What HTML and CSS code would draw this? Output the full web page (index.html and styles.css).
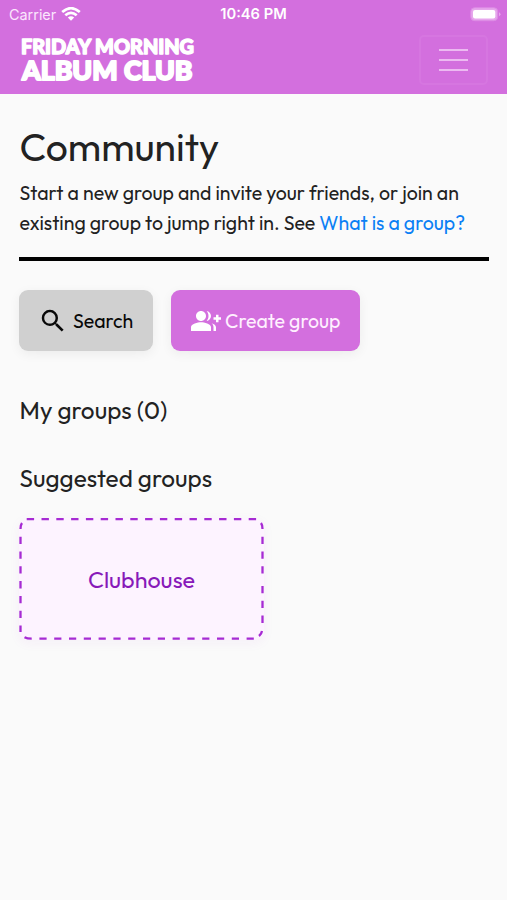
FILE: index.html
```html
<!DOCTYPE html>
<html lang="en">
<head>
<meta charset="utf-8">
<meta name="viewport" content="width=device-width, initial-scale=1">
<title>Community – Friday Morning Album Club</title>
<link rel="stylesheet" href="styles.css">
</head>
<body>
<header class="header">
  <div class="status">
    <div class="carrier"><span>Carrier</span>
      <svg width="20" height="14" viewBox="0 0 20 14" fill="none" stroke="#fff" stroke-width="2.7"><path d="M1.2 5.1Q10-2.7 18.8 5.1M4.3 8.3Q10 3.4 15.7 8.3"/><path d="M6.8 10.4Q10 7.9 13.2 10.4L10 13.8Z" fill="#fff" stroke="none"/></svg>
    </div>
    <div class="time">10:46 PM</div>
    <svg class="battery" width="31" height="15" viewBox="0 0 31 15"><rect x=".7" y=".7" width="27" height="13" rx="4" fill="#e6a6ec" stroke="#dc8be4"/><rect x="3" y="3" width="22.3" height="8.6" rx="2" fill="#fff"/><path d="M29 5.2Q32 7.2 29 9.2Z" fill="#e6a6ec"/></svg>
  </div>
  <div class="navbar">
    <svg class="logo" width="180" height="54" viewBox="0 0 180 54" role="img" aria-label="Friday Morning Album Club"><text class="logo-top" x="1" y="22" textLength="173" lengthAdjust="spacingAndGlyphs">FRIDAY MORNING</text><text class="logo-bottom" x="2" y="47.800" textLength="170.500" lengthAdjust="spacingAndGlyphs">ALBUM CLUB</text></svg>
    <button class="toggle" aria-label="Menu"><span></span><span></span><span></span></button>
  </div>
</header>
<main class="page">
  <h1>Community</h1>
  <p class="intro"><span class="line">Start a new group and invite your friends, or join an</span><span class="line">existing group to jump right in. See <a href="#">What is a group?</a></span></p>
  <hr>
  <div class="actions">
    <button class="btn search"><svg width="30" height="30" viewBox="0 0 24 24" fill="#080808"><path d="M15.5 14h-.79l-.28-.27A6.47 6.47 0 0 0 16 9.5 6.5 6.5 0 1 0 9.5 16c1.61 0 3.09-.59 4.23-1.57l.27.28v.79l5 4.99L20.49 19l-4.99-5zm-6 0C7.01 14 5 11.99 5 9.5S7.01 5 9.5 5 14 7.01 14 9.5 11.99 14 9.5 14z"/></svg><span>Search</span></button>
    <button class="btn create"><svg width="30" height="30" viewBox="0 0 24 24" fill="#fff"><path d="M22 9V7h-2v2h-2v2h2v2h2v-2h2V9zM8 12c2.210 0 4-1.790 4-4s-1.790-4-4-4-4 1.790-4 4 1.790 4 4 4zm0 1c-2.670 0-8 1.340-8 4v3h16v-3c0-2.660-5.330-4-8-4zm4.510-8.950C13.430 5.110 14 6.490 14 8s-.57 2.890-1.490 3.950C14.470 11.700 16 10.040 16 8s-1.530-3.700-3.490-3.950zm4.020 9.780C17.420 14.660 18 15.700 18 17v3h2v-3c0-1.450-1.590-2.510-3.470-3.170z"/></svg><span>Create group</span></button>
  </div>
  <h2 class="mine">My groups (0)</h2>
  <h2 class="suggested">Suggested groups</h2>
  <a class="card" href="#">
    <svg class="outline" width="245" height="122" viewBox="0 0 245 122" fill="none" stroke="#a62bd3" stroke-width="2.3"><path d="M7.700 1.200H238" stroke-dasharray="7.400 7.400"/><path d="M20.400 120.700H238" stroke-dasharray="7.200 7.600"/><path d="M1.500 18.700V114M243.500 18.700V56M243.500 68V106" stroke-dasharray="7.300 7.500"/><path d="M1.500 11Q1.500 7 3 5M243.500 11Q243.500 7 242 5M5.500 119.300Q8 120.700 12.700 120.700M243 113Q242.500 116 240 118"/></svg>
    <span>Clubhouse</span>
  </a>
</main>
</body>
</html>
```
FILE: styles.css
```css
* { box-sizing: border-box; }
body {
  margin: 0;
  min-height: 900px;
  background: #fafafa;
  color: #222;
  font-family: Outfit, Lato, sans-serif;
}
button { font: inherit; border: 0; padding: 0; }
.header { height: 94px; background: #d36fde; }
.status {
  display: grid;
  grid-template-columns: 1fr auto 1fr;
  align-items: center;
  height: 27px;
  padding: 0 6px 0 9px;
  color: #fff;
  font: 14.400px/27px Inter, sans-serif;
}
.carrier { display: flex; align-items: center; gap: 5px; color: #fbe6fd; }
.carrier svg { margin-top: -1px; }
.time { margin: 0 1.500px 0 -1.500px; padding-top: 1px; font-weight: 600; font-size: 14.700px; }
.battery { justify-self: end; }
.navbar {
  display: flex;
  justify-content: space-between;
  align-items: flex-start;
  padding: 5px 19px 0 20px;
}
.logo { fill: #fff; stroke: #fff; stroke-linejoin: round; font-family: Lato, sans-serif; font-weight: 900; }
.logo-top { font-size: 20px; stroke-width: 1.400px; }
.logo-bottom { font-size: 27px; stroke-width: 2px; }
.toggle {
  display: flex;
  flex-direction: column;
  align-items: center;
  justify-content: center;
  gap: 8px;
  width: 69px;
  height: 50px;
  margin-top: 3px;
  border: 2px solid #d676e0;
  border-radius: 5px;
  background: transparent;
}
.toggle span { width: 29px; height: 2px; background: #ecbaf1; }
.page { padding: 32px 18px 0 19px; }
h1, h2, p { margin: 0; font-weight: 400; }
h1 { padding-left: .5px; font-size: 39px; line-height: 42px; }
.intro { margin-top: 10px; padding-left: .5px; font-size: 19.500px; line-height: 29.500px; }
.line { display: block; white-space: nowrap; }
a { color: #0b80f5; text-decoration: none; }
hr { height: 4px; margin: 20px 0 0; border: 0; background: #000; }
.actions { display: flex; gap: 18px; margin-top: 29px; }
.btn {
  display: flex;
  align-items: center;
  height: 61px;
  border-radius: 9px;
  font-size: 19.500px;
  white-space: nowrap;
  box-shadow: 0 3px 12px rgba(0, 0, 0, .06);
}
.search { width: 134px; padding-left: 19px; gap: 5px; background: #d0d0d0; color: #080808; }
.create { width: 189px; padding-left: 19.500px; gap: 4.500px; background: #d36fde; color: #fff0ff; }
h2 { padding-left: .5px; font-size: 24.300px; line-height: 30px; }
.mine { margin-top: 44px; }
.suggested { margin-top: 38px; }
.card {
  display: grid;
  place-items: center;
  width: 245px;
  height: 122px;
  margin-top: 25px;
  border-radius: 9px;
  background: #fdf3ff;
  color: #8819b9;
  font-size: 23.300px;
  box-shadow: 0 3px 12px rgba(160, 40, 200, .05);
}
.card > * { grid-area: 1 / 1; }
```
